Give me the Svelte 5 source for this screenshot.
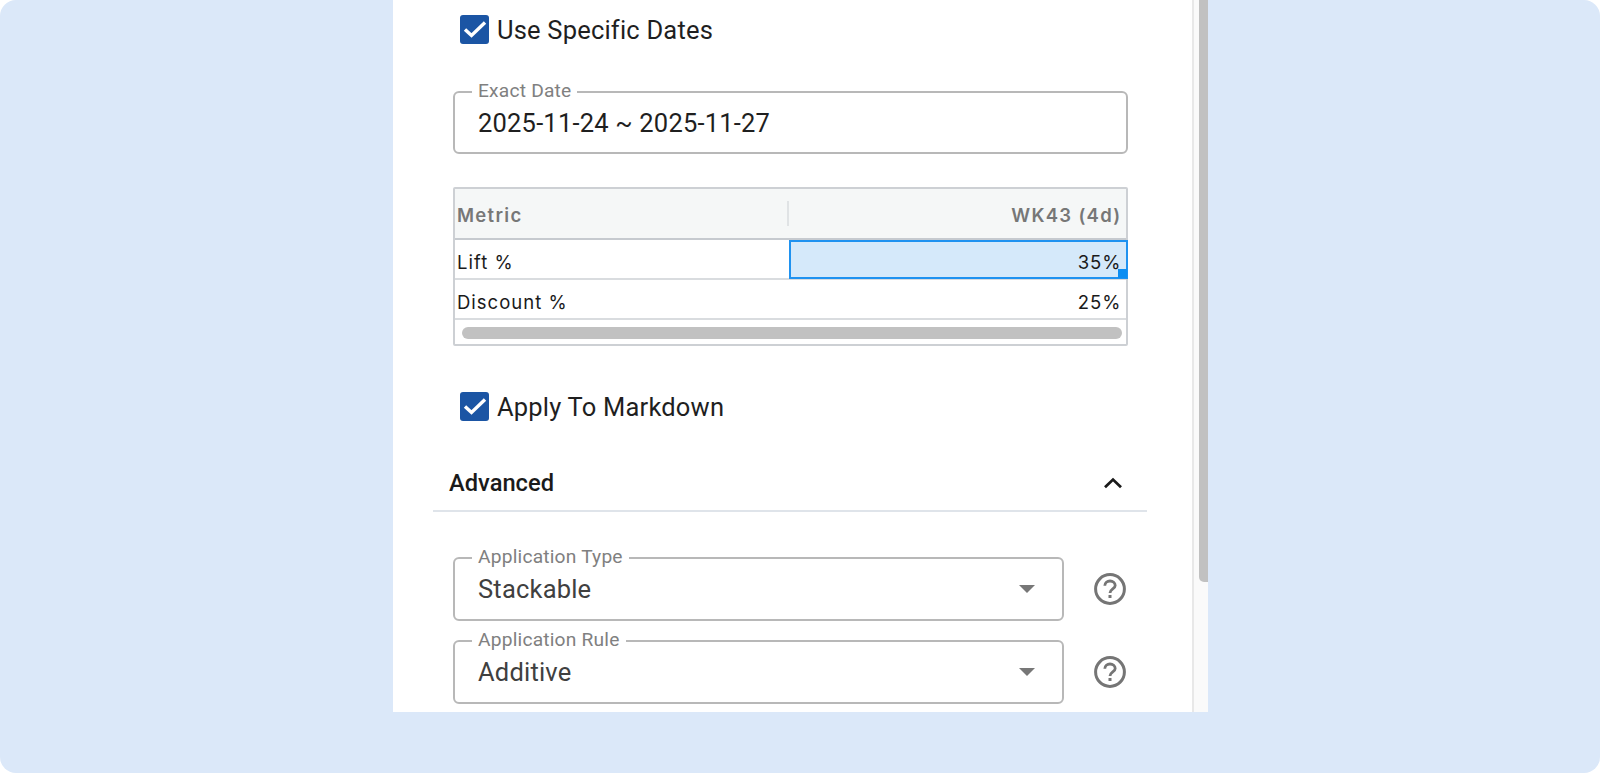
<script>
	const rows = [
		{ metric: 'Lift %', value: '35%', selected: true },
		{ metric: 'Discount %', value: '25%', selected: false }
	];
	const selects = [
		{ label: 'Application Type', value: 'Stackable' },
		{ label: 'Application Rule', value: 'Additive' }
	];
</script>

{#snippet checkbox(text)}
	<label class="check">
		<span class="box">
			<svg width="29" height="29" viewBox="0 0 29 29" fill="none">
				<path d="M5 14.5 L11.5 20.5 L25 7.5" stroke="#fff" stroke-width="3.4" />
			</svg>
		</span>
		<span>{text}</span>
	</label>
{/snippet}

<div class="frame">
	<div class="panel">
		<div class="content">
			<div class="first">{@render checkbox('Use Specific Dates')}</div>

			<div class="field date">
				<span class="legend">Exact Date</span>
				<span class="value dark">2025-11-24 ~ 2025-11-27</span>
			</div>

			<div class="grid">
				<div class="head">
					<div class="cell metric">Metric</div>
					<div class="sep"></div>
					<div class="cell num">WK43 (4d)</div>
				</div>
				{#each rows as row}
					<div class="row">
						<div class="cell metric">{row.metric}</div>
						<div class="cell num" class:selected={row.selected}>
							{row.value}
							{#if row.selected}<span class="handle"></span>{/if}
						</div>
					</div>
				{/each}
				<div class="hscroll"><div class="hthumb"></div></div>
			</div>

			<div class="second">{@render checkbox('Apply To Markdown')}</div>

			<div class="section">
				<span>Advanced</span>
				<svg width="24" height="24" viewBox="0 0 24 24" fill="none">
					<path d="M4 16.2 L12 8.6 L20 16.2" stroke="#1a1a1a" stroke-width="2.8" />
				</svg>
			</div>

			<div class="selects">
				{#each selects as s}
					<div class="select-row">
						<div class="field select">
							<span class="legend">{s.label}</span>
							<span class="value">{s.value}</span>
							<span class="arrow"></span>
						</div>
						<svg class="help" width="32" height="32" viewBox="0 0 32 32" fill="none">
							<circle cx="16" cy="16" r="14.4" stroke="#757575" stroke-width="3" />
							<path d="M10.8 12.8 C10.8 9.8 13.2 8 16 8 C18.9 8 21.2 9.8 21.2 12.4 C21.2 15.8 16 16 16 20" stroke="#757575" stroke-width="2.8" />
							<rect x="14.5" y="22" width="3" height="3" fill="#757575" />
						</svg>
					</div>
				{/each}
			</div>
		</div>

		<div class="vscroll"><div class="vthumb"></div></div>
	</div>
</div>

<style>
	:global(body) {
		margin: 0;
		background: #fff;
	}

	.frame {
		width: 1600px;
		height: 773px;
		background: #dbe8f9;
		border-radius: 16px;
		overflow: hidden;
		font-family: Roboto, sans-serif;
		padding-left: 393px;
		box-sizing: border-box;
	}

	.panel {
		width: 815px;
		height: 712px;
		background: #fff;
		display: flex;
		overflow: hidden;
	}

	.content {
		width: 799px;
		flex-shrink: 0;
		padding: 0 45px 0 60px;
		box-sizing: border-box;
	}

	.first { padding: 15px 0 0 7px; }
	.second { padding: 46px 0 0 7px; }

	.check {
		display: flex;
		align-items: center;
		gap: 8px;
		height: 29px;
		font-size: 25.5px;
		color: #1f1f1f;
		letter-spacing: 0.2px;
	}

	.box {
		width: 29px;
		height: 29px;
		border-radius: 3px;
		background: #1b55a4;
		display: flex;
		align-items: center;
		justify-content: center;
	}

	.field {
		position: relative;
		height: 64px;
		box-sizing: border-box;
		border: 2px solid #b8b8b8;
		border-radius: 6px;
		padding: 0 23px;
		display: flex;
		align-items: center;
	}

	.date {
		margin-top: 47px;
		width: 675px;
		height: 63px;
	}

	.legend {
		position: absolute;
		left: 17px;
		top: -13px;
		padding: 0 6px;
		background: #fff;
		font-size: 19.2px;
		line-height: 21px;
		color: #808080;
		letter-spacing: 0.2px;
	}

	.value {
		font-size: 25.5px;
		color: #404040;
		letter-spacing: 0.2px;
	}
	.value.dark { color: #1f1f1f; }

	.grid {
		margin-top: 33px;
		width: 675px;
		height: 159px;
		box-sizing: border-box;
		border: 2px solid #cdd0d4;
		border-radius: 2px;
		font-family: Inter, sans-serif;
		font-size: 18.5px;
		letter-spacing: 1px;
		color: #1a1a1a;
	}

	.head {
		display: flex;
		align-items: center;
		height: 51px;
		background: #f5f7f7;
		border-bottom: 2px solid #c6cacf;
		box-sizing: border-box;
		color: #777;
		font-weight: 600;
		letter-spacing: 1.3px;
	}

	.head .cell { padding-top: 2px; }
	.head .metric { width: 332px; }

	.sep {
		width: 2px;
		height: 25px;
		background: #e0e3e5;
		flex-shrink: 0;
	}

	.cell {
		display: flex;
		align-items: center;
		height: 100%;
		box-sizing: border-box;
		padding: 5px 4.5px 0 2px;
	}

	.metric { width: 334px; flex-shrink: 0; }

	.num {
		flex: 1;
		justify-content: flex-end;
		position: relative;
	}

	.row {
		display: flex;
		height: 40px;
		border-bottom: 2px solid #d9dcdf;
		box-sizing: border-box;
	}

	.selected {
		margin-right: -2px;
		height: 39px;
		background: #d5e9fa;
		border: 2px solid #1f92f0;
		padding: 4px 4.5px 0 0;
	}

	.handle {
		position: absolute;
		right: -1px;
		bottom: -1px;
		width: 9px;
		height: 9px;
		background: #0d8ef2;
	}

	.hscroll {
		height: 25px;
		padding: 7px 4px 0 7px;
		box-sizing: border-box;
	}

	.hthumb {
		height: 12px;
		border-radius: 6px;
		background: #c1c1c1;
	}

	.section {
		margin: 46px 0 0 -20px;
		height: 45px;
		padding: 0 22px 12px 16px;
		box-sizing: border-box;
		border-bottom: 2px solid #dfe4ea;
		display: flex;
		align-items: center;
		justify-content: space-between;
		font-size: 23.7px;
		font-weight: 500;
		color: #1a1a1a;
	}

	.selects {
		margin-top: 45px;
		display: flex;
		flex-direction: column;
		gap: 19px;
	}

	.select-row {
		display: flex;
		align-items: center;
		gap: 30px;
	}

	.select {
		width: 611px;
		flex-shrink: 0;
	}

	.arrow {
		position: absolute;
		right: 27px;
		top: 26px;
		border-left: 8px solid transparent;
		border-right: 8px solid transparent;
		border-top: 8px solid #777;
	}

	.vscroll {
		flex: 1;
		background: #fafafa;
		border-left: 2px solid #e8e8e8;
		display: flex;
		justify-content: flex-end;
	}

	.vthumb {
		width: 9px;
		height: 582px;
		background: #c1c1c1;
		border-radius: 0 0 0 5px;
	}
</style>
